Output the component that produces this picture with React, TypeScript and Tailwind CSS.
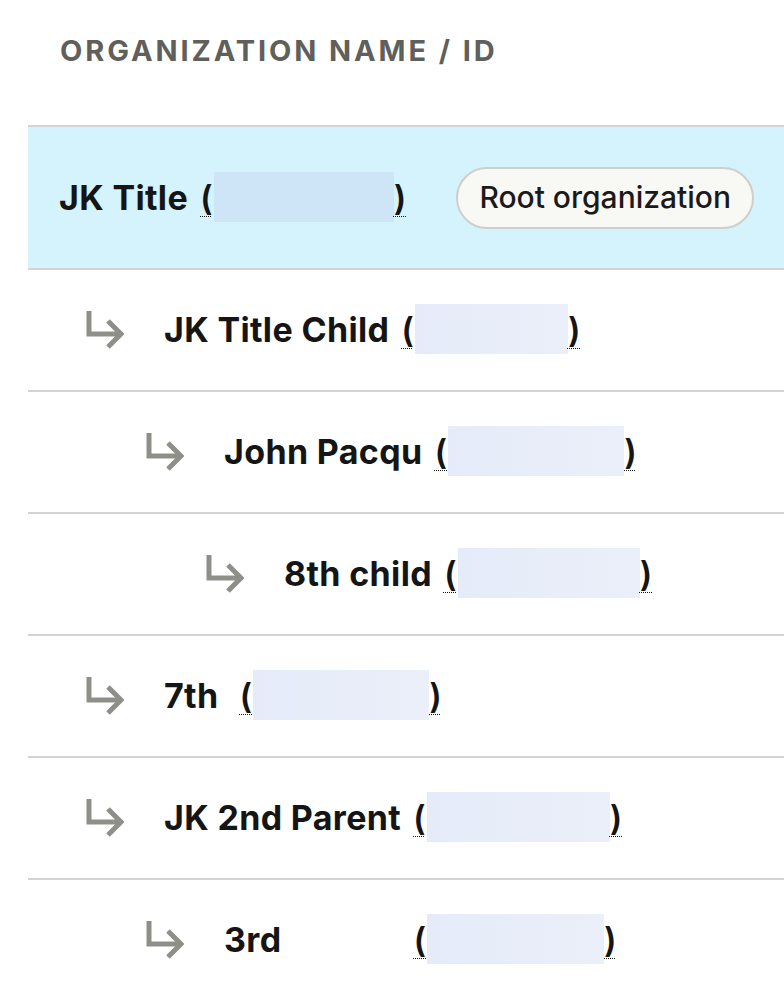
import React from "react";

type Row = {
  name: string;
  level: number;
  box: number;
  gap?: number;
  root?: boolean;
};

const rows: Row[] = [
  { name: "JK Title", level: 0, box: 180, root: true },
  { name: "JK Title Child", level: 1, box: 153 },
  { name: "John Pacqu", level: 2, box: 176 },
  { name: "8th child", level: 3, box: 182 },
  { name: "7th", level: 1, box: 176, gap: 21 },
  { name: "JK 2nd Parent", level: 1, box: 183 },
  { name: "3rd", level: 2, box: 177, gap: 132 },
];

function Arrow() {
  return (
    <svg width="40" height="42" viewBox="0 0 40 42" className="shrink-0">
      <path
        d="M5 2 V25 H36"
        fill="none"
        stroke="#8f8f89"
        strokeWidth="5"
        strokeLinejoin="miter"
      />
      <path
        d="M24 12 L37 25 L24 38"
        fill="none"
        stroke="#8f8f89"
        strokeWidth="5"
        strokeLinejoin="miter"
      />
    </svg>
  );
}

function Id({ width, root, gap }: { width: number; root?: boolean; gap?: number }) {
  return (
    <span
      className="flex items-center font-semibold underline decoration-dotted decoration-1 underline-offset-[6px] text-[#151515]"
      style={{ marginLeft: gap ?? 12 }}
    >
      <span>(</span>
      <span
        className={
          root
            ? "inline-block h-[50px] bg-[#cde5f6] -mt-[2px] ml-[1px]"
            : "inline-block h-[50px] bg-gradient-to-r from-[#e6ebf9] to-[#eaeff9] -mt-[2px] ml-[1px]"
        }
        style={{ width }}
      />
      <span>)</span>
    </span>
  );
}

export default function App() {
  return (
    <div className="w-[784px] min-h-[996px] bg-white overflow-hidden font-['Inter',sans-serif]">
      <div className="h-[125px] pl-[60px] pt-[34px]">
        <div className="leading-[34px] text-[29px] font-bold tracking-[0.1em] text-[#5f605b] uppercase whitespace-nowrap">
          Organization Name / ID
        </div>
      </div>
      <div className="ml-[28px] border-t-2 border-[#d3d3cf]">
        {rows.map((r, i) => (
          <div
            key={i}
            className={
              r.root
                ? "h-[143px] bg-[#d5f3fd] border-b-2 border-[#d3d3cf] flex items-center pl-[31px]"
                : "h-[122px] bg-white border-b-2 border-[#d3d3cf] flex items-center pl-[31px]"
            }
          >
            {r.level > 0 && (
              <div
                className="flex items-center shrink-0"
                style={{ marginLeft: (r.level - 1) * 60 + 25 }}
              >
                <Arrow />
                <div className="w-[40px]" />
              </div>
            )}
            <span className="text-[34px] font-bold tracking-[0.01em] text-[#151515] leading-none whitespace-nowrap">
              {r.name}
            </span>
            <span className="text-[34px] leading-none">
              <Id width={r.box} root={r.root} gap={r.gap} />
            </span>
            {r.root && (
              <span className="ml-[50px] h-[62px] px-[21px] flex items-center rounded-full border-2 border-[#cfcfca] bg-[#f8f8f5] text-[30px] font-medium text-[#1a1a1a] whitespace-nowrap">
                Root organization
              </span>
            )}
          </div>
        ))}
      </div>
    </div>
  );
}
